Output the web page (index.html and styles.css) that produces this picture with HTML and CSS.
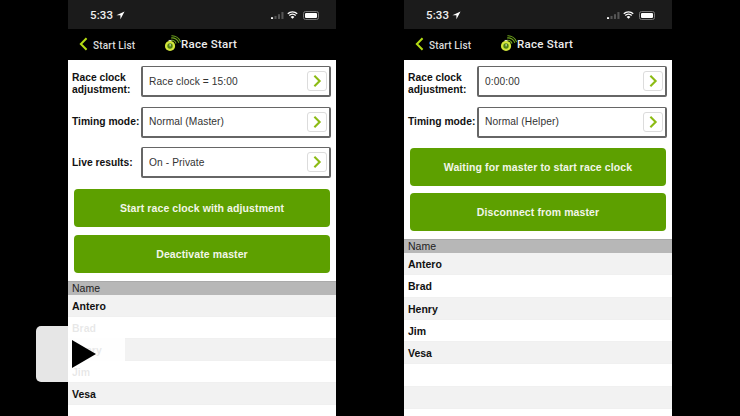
FILE: index.html
```html
<!DOCTYPE html>
<html lang="en">
<head>
<meta charset="utf-8">
<title>Race Start</title>
<link rel="stylesheet" href="styles.css">
</head>
<body>
<svg class="defs" width="0" height="0" aria-hidden="true">
  <symbol id="chev" viewBox="0 0 24 24"><path d="M7.500 3 16.500 12 7.500 21" fill="none" stroke="currentColor" stroke-width="3.600"/></symbol>
  <symbol id="logo" viewBox="0 0 24 24">
    <path d="M10 4.200a10 10 0 0 1 11 7M10.500 1a13 13 0 0 1 13 9M10 7.500a6.500 6.500 0 0 1 7 4.500" fill="none" stroke="#6fa51d" stroke-width="1.500"/>
    <rect x="6.500" y="7" width="4" height="2.500" fill="#d8d8c8"/>
    <circle cx="8.500" cy="15.500" r="7.200" fill="#d2e63c"/>
    <circle cx="8.500" cy="15.500" r="3.800" fill="#4f7f12"/>
    <rect x="8" y="12.500" width="1.200" height="3.500" fill="#fff"/>
  </symbol>
</svg>

<main class="phone">
  <div class="status">
    <span class="time">5:33</span>
    <svg class="loc" viewBox="0 0 10 10"><path d="M9.500.5 .5 4.600h4.400v4.600z" fill="#fff"/></svg>
    <span class="status-right">
      <svg class="signal" viewBox="0 0 15 8"><rect x="0" y="6" width="2.400" height="2" fill="#fff"/><rect x="4" y="4.500" width="2.400" height="3.500" fill="#555"/><rect x="8" y="2.500" width="2.400" height="5.500" fill="#555"/><rect x="12" y="0" width="2.400" height="8" fill="#555"/></svg>
      <svg class="wifi" viewBox="0 0 12 9"><path d="M.7 3.200a7.500 7.500 0 0 1 10.600 0M2.400 5a5 5 0 0 1 7.200 0" fill="none" stroke="#fff" stroke-width="1.500"/><path d="M6 8.800 3.900 6.700a3 3 0 0 1 4.200 0z" fill="#fff"/></svg>
      <span class="battery"><span class="charge"></span></span>
    </span>
  </div>
  <header class="nav">
    <span class="back"><svg class="back-chev" viewBox="0 0 10 16"><path d="M8.500 1.500 2 8l6.500 6.500" fill="none" stroke="#b4dc14" stroke-width="2.300"/></svg>Start List</span>
    <span class="title"><svg class="logo"><use href="#logo"/></svg>Race Start</span>
  </header>
  <div class="form">
    <div class="row"><span class="label label-two">Race clock<br>adjustment:</span><div class="select"><span>Race clock = 15:00</span><span class="go"><svg><use href="#chev"/></svg></span></div></div>
    <div class="row"><span class="label">Timing mode:</span><div class="select"><span>Normal (Master)</span><span class="go"><svg><use href="#chev"/></svg></span></div></div>
    <div class="row"><span class="label">Live results:</span><div class="select"><span>On - Private</span><span class="go"><svg><use href="#chev"/></svg></span></div></div>
  </div>
  <div class="actions">
    <button class="btn">Start race clock with adjustment</button>
    <button class="btn">Deactivate master</button>
  </div>
  <div class="table">
    <div class="thead">Name</div>
    <div class="tr">Antero</div>
    <div class="tr">Brad</div>
    <div class="tr">Henry</div>
    <div class="tr">Jim</div>
    <div class="tr">Vesa</div>
    <div class="tr"></div>
  </div>
</main>

<main class="phone">
  <div class="status">
    <span class="time">5:33</span>
    <svg class="loc" viewBox="0 0 10 10"><path d="M9.500.5 .5 4.600h4.400v4.600z" fill="#fff"/></svg>
    <span class="status-right">
      <svg class="signal" viewBox="0 0 15 8"><rect x="0" y="6" width="2.400" height="2" fill="#fff"/><rect x="4" y="4.500" width="2.400" height="3.500" fill="#555"/><rect x="8" y="2.500" width="2.400" height="5.500" fill="#555"/><rect x="12" y="0" width="2.400" height="8" fill="#555"/></svg>
      <svg class="wifi" viewBox="0 0 12 9"><path d="M.7 3.200a7.500 7.500 0 0 1 10.600 0M2.400 5a5 5 0 0 1 7.200 0" fill="none" stroke="#fff" stroke-width="1.500"/><path d="M6 8.800 3.900 6.700a3 3 0 0 1 4.200 0z" fill="#fff"/></svg>
      <span class="battery"><span class="charge"></span></span>
    </span>
  </div>
  <header class="nav">
    <span class="back"><svg class="back-chev" viewBox="0 0 10 16"><path d="M8.500 1.500 2 8l6.500 6.500" fill="none" stroke="#b4dc14" stroke-width="2.300"/></svg>Start List</span>
    <span class="title"><svg class="logo"><use href="#logo"/></svg>Race Start</span>
  </header>
  <div class="form">
    <div class="row"><span class="label label-two">Race clock<br>adjustment:</span><div class="select"><span>0:00:00</span><span class="go"><svg><use href="#chev"/></svg></span></div></div>
    <div class="row"><span class="label">Timing mode:</span><div class="select"><span>Normal (Helper)</span><span class="go"><svg><use href="#chev"/></svg></span></div></div>
  </div>
  <div class="actions actions-helper">
    <button class="btn">Waiting for master to start race clock</button>
    <button class="btn">Disconnect from master</button>
  </div>
  <div class="table table-helper">
    <div class="thead">Name</div>
    <div class="tr">Antero</div>
    <div class="tr">Brad</div>
    <div class="tr">Henry</div>
    <div class="tr">Jim</div>
    <div class="tr">Vesa</div>
    <div class="tr"></div>
    <div class="tr"></div>
    <div class="tr"></div>
  </div>
</main>

<div class="play"><span class="tri"></span></div>
</body>
</html>
```

FILE: styles.css
```css
* { box-sizing: border-box; }
html, body { margin: 0; height: 416px; overflow: hidden; background: #000; }
body {
  display: flex;
  gap: 68px;
  padding-left: 68px;
  font-family: "Liberation Sans", Arial, sans-serif;
  color: #111;
}
.defs { position: absolute; }
.phone {
  width: 268px;
  height: 416px;
  background: #fff;
  overflow: hidden;
  flex: none;
}
.status {
  height: 29px;
  background: #1b1b1b;
  display: flex;
  align-items: center;
  padding: 1px 0 0 22px;
  color: #fff;
}
.time { font: 500 11.500px Roboto, "Liberation Sans", sans-serif; letter-spacing: .1px; color: #eee; }
.loc { width: 9px; height: 9px; margin-left: 3px; }
.status-right { margin-left: auto; margin-right: 17px; display: flex; align-items: center; gap: 3px; }
.signal { width: 13px; height: 7px; margin-right: -1px; }
.wifi { width: 11px; height: 8px; margin-right: -1px; margin-left: 1px; }
.battery {
  width: 16px; height: 9px;
  border-radius: 2.500px;
  border: 1px solid #777;
  margin-left: 3px;
  padding: 1px;
  display: block;
}
.charge { display: block; height: 100%; width: 100%; background: #fff; border-radius: 1px; }
.nav {
  height: 31px;
  background: #000;
  color: #e4e4e4;
  display: flex;
  align-items: center;
  padding-left: 11px;
}
.back { display: flex; align-items: center; width: 86px; font: 500 10px Roboto, "Liberation Sans", sans-serif; color: #dcdcdc; letter-spacing: .15px; padding-top: 1px; }
.back-chev { width: 9px; height: 14px; margin-right: 5px; margin-top: -2px; }
.title { display: flex; align-items: center; font: 500 11.500px Roboto, "Liberation Sans", sans-serif; letter-spacing: .25px; color: #ececec; margin-top: -2px; }
.logo { width: 17px; height: 17px; margin-right: 0; margin-top: -1px; margin-left: -1px; }
.form { padding: 6px 5px 0 4px; display: flex; flex-direction: column; gap: 9.500px; }
.row { display: flex; align-items: center; height: 31px; }
.label { width: 68.500px; flex: none; font-size: 10.300px; font-weight: 700; line-height: 12px; color: #111; white-space: nowrap; }
.label-two { padding-top: 4px; }
.select {
  width: 190.500px;
  height: 31px;
  border: 2px solid #666;
  border-top-width: 1.500px;
  border-radius: 2px;
  display: flex;
  align-items: center;
  justify-content: space-between;
  padding: 0 2px 0 6.500px;
  font-size: 10.200px;
  color: #333;
  letter-spacing: .1px;
}
.go {
  width: 20px; height: 20px;
  border: 1.500px solid #dcdcdc;
  border-radius: 3px;
  color: #8cbb14;
  display: flex; align-items: center; justify-content: center;
}
.go svg { width: 14px; height: 14px; }
.actions { padding: 11px 6px 0; display: flex; flex-direction: column; gap: 8px; }
.actions-helper { padding-top: 10px; gap: 7.500px; }
.btn {
  height: 38px;
  border: 0;
  border-radius: 4px;
  background: #5da000;
  color: #f2f6e8;
  font: 700 10.500px "Liberation Sans", Arial, sans-serif;
  letter-spacing: .1px;
  padding: 0;
}
.table { margin-top: 8px; }
.thead {
  height: 14px;
  background: #b7b7b7;
  border-top: 1px solid #aaa;
  font-size: 10.500px;
  line-height: 13px;
  padding-left: 4px;
  color: #222;
}
.tr {
  height: 22.100px;
  padding-left: 4px;
  font-size: 10.500px;
  font-weight: 700;
  line-height: 22px;
  color: #111;
  background: #fff;
  border-bottom: 1px solid #f0f0f0;
}
.table-helper .tr { height: 22.300px; }
.tr:nth-child(even) { background: #f2f2f2; }
.play {
  position: absolute;
  left: 36px;
  top: 326px;
  width: 89px;
  height: 56px;
  border-radius: 5px;
  background: rgba(255, 255, 255, .9);
}
.play::before {
  content: "";
  position: absolute;
  left: 32px;
  top: -6px;
  width: 57px;
  height: 6px;
  background: rgba(255, 255, 255, .9);
}
.tri {
  position: absolute;
  left: 36px;
  top: 14px;
  border-left: 24px solid #000;
  border-top: 14px solid transparent;
  border-bottom: 14px solid transparent;
}
```
